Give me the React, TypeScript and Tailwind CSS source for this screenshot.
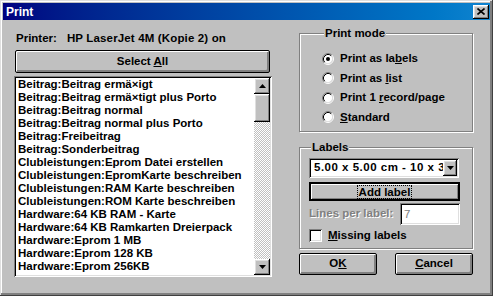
import React from 'react';

const items = [
  'Beitrag:Beitrag ermä×igt',
  'Beitrag:Beitrag ermä×tigt plus Porto',
  'Beitrag:Beitrag normal',
  'Beitrag:Beitrag normal plus Porto',
  'Beitrag:Freibeitrag',
  'Beitrag:Sonderbeitrag',
  'Clubleistungen:Eprom Datei erstellen',
  'Clubleistungen:EpromKarte beschreiben',
  'Clubleistungen:RAM Karte beschreiben',
  'Clubleistungen:ROM Karte beschreiben',
  'Hardware:64 KB RAM - Karte',
  'Hardware:64 KB Ramkarten Dreierpack',
  'Hardware:Eprom 1 MB',
  'Hardware:Eprom 128 KB',
  'Hardware:Eprom 256KB',
];

const raised =
  'shadow-[inset_-1px_-1px_#000,inset_1px_1px_#fff,inset_-2px_-2px_#808080,inset_2px_2px_#dfdfdf]';
const sunken =
  'shadow-[inset_1px_1px_#808080,inset_-1px_-1px_#fff,inset_2px_2px_#000,inset_-2px_-2px_#dfdfdf]';
const oldButton =
  'border border-black rounded-[2px] shadow-[inset_1px_1px_#fff,inset_-1px_-1px_#808080,inset_-2px_-2px_#808080]';

const Arrow = ({ down }: { down?: boolean }) => (
  <svg width="7" height="4" viewBox="0 0 7 4">
    {down ? <path d="M0 0h7L3.5 4z" fill="#000" /> : <path d="M0 4h7L3.5 0z" fill="#000" />}
  </svg>
);

const Radio = ({ checked }: { checked?: boolean }) => (
  <svg width="12" height="12" viewBox="0 0 12 12" className="shrink-0">
    <circle cx="6" cy="6" r="4.5" fill="#fff" />
    <path d="M2.11 9.89A5.5 5.5 0 0 1 9.89 2.11" stroke="#808080" fill="none" />
    <path d="M9.89 2.11A5.5 5.5 0 0 1 2.11 9.89" stroke="#fff" fill="none" />
    <path d="M2.82 9.18A4.5 4.5 0 0 1 9.18 2.82" stroke="#000" fill="none" />
    <path d="M9.18 2.82A4.5 4.5 0 0 1 2.82 9.18" stroke="#dfdfdf" fill="none" />
    {checked && <circle cx="6" cy="6" r="2" fill="#000" />}
  </svg>
);

const Group = ({ title, className, children }: { title: string; className?: string; children: React.ReactNode }) => (
  <fieldset
    className={`border border-[#808080] shadow-[1px_1px_0_#fff,inset_1px_1px_0_#fff] ${className ?? ''}`}
  >
    <legend className="ml-[2px] px-[1px] bg-[#c0c0c0] leading-[13px]">{title}</legend>
    {children}
  </fieldset>
);

export default function App() {
  return (
    <div className="w-[493px] h-[296px] bg-[#c0c0c0] p-[3px] flex flex-col text-[11.5px] font-bold text-black font-['Liberation_Sans',Arial,sans-serif] shadow-[inset_-1px_-1px_#404040,inset_1px_1px_#dfdfdf,inset_-3px_-3px_#808080,inset_2px_2px_#fff]">
      {/* title bar */}
      <div className="h-[17px] flex items-center justify-between pl-[3px] bg-linear-to-r from-[#000080] to-[#1084d0]">
        <span className="text-white text-[12px]">Print</span>
        <div className={`w-[16px] h-[14px] mr-[1px] bg-[#c0c0c0] flex items-center justify-center ${raised}`}>
          <svg width="8" height="7" viewBox="0 0 8 7">
            <path d="M0.5 0.5l7 6M7.5 0.5l-7 6" stroke="#000" strokeWidth="1.6" />
          </svg>
        </div>
      </div>

      <div className="flex flex-1 pl-[11px]">
        {/* left column */}
        <div className="w-[258px] pt-[12px] flex flex-col">
          <div className="flex leading-[13px] pl-[2px]">
            <span>Printer:</span>
            <span className="ml-[10px] tracking-[0.15px]">HP LaserJet 4M (Kopie 2) on</span>
          </div>
          <button className={`mt-[5px] ml-[1px] w-[255px] h-[23px] bg-[#c0c0c0] ${oldButton}`}>
            Select <span className="underline">A</span>ll
          </button>
          <div className={`mt-[3px] h-[201px] flex p-[2px] bg-white ${sunken}`}>
            <div className="flex-1 pl-[2px] overflow-hidden leading-[13px] whitespace-nowrap">
              {items.map((t) => (
                <div key={t}>{t}</div>
              ))}
            </div>
            <div className="w-[16px] flex flex-col">
              <div className={`h-[16px] bg-[#c0c0c0] flex items-center justify-center ${raised}`}>
                <Arrow />
              </div>
              <div className="flex-1 bg-[image:repeating-conic-gradient(#c0c0c0_0%_25%,#ffffff_0%_50%)] bg-[length:2px_2px]">
                <div className={`h-[28px] bg-[#c0c0c0] ${raised}`} />
              </div>
              <div className={`h-[16px] bg-[#c0c0c0] flex items-center justify-center ${raised}`}>
                <Arrow down />
              </div>
            </div>
          </div>
        </div>

        {/* right column */}
        <div className="ml-[27px] w-[174px] pt-[7px] flex flex-col">
          <Group title="Print mode" className="pt-[9px] pb-[4px] pl-[22px]">
            {[
              ['Print as la', 'b', 'els', true],
              ['Print as ', 'l', 'ist', false],
              ['Print 1 ', 'r', 'ecord/page', false],
              ['', 'S', 'tandard', false],
            ].map(([a, u, b, c]) => (
              <div key={`${a}${u}${b}`} className="h-[19.5px] flex items-center gap-[6px]">
                <Radio checked={c as boolean} />
                <span>
                  {a as string}
                  <span className="underline">{u as string}</span>
                  {b as string}
                </span>
              </div>
            ))}
          </Group>

          <Group title="Labels" className="mt-[9px] pt-[4px] pb-[6px] pl-[9px]">
            <div className={`w-[150px] h-[20px] flex items-center p-[2px] bg-white ${sunken}`}>
              <span className="flex-1 pl-[3px] overflow-hidden whitespace-nowrap tracking-[0.5px]">5.00 x 5.00 cm - 10 x 3</span>
              <div className={`w-[14px] h-[16px] bg-[#c0c0c0] flex items-center justify-center ${raised}`}>
                <Arrow down />
              </div>
            </div>
            <button className="mt-[4px] w-[151px] h-[19px] bg-[#c0c0c0] border-2 border-black shadow-[inset_1px_1px_#fff,inset_-1px_-1px_#808080] flex items-center justify-center">
              <span className="outline-1 outline-dotted outline-black px-[1px] leading-[12px]">Add label</span>
            </button>
            <div className="mt-[2px] w-[151px] h-[22px] flex items-center">
              <span className="text-[#808080] [text-shadow:1px_1px_0_#fff]">Lines per label:</span>
              <div className={`ml-auto w-[60px] h-[22px] bg-white pl-[4px] pt-[3px] text-[#808080] font-normal ${sunken}`}>
                7
              </div>
            </div>
            <div className="mt-[4px] flex items-center gap-[6px] h-[13px]">
              <div className={`w-[13px] h-[13px] bg-white ${sunken}`} />
              <span>
                <span className="underline">M</span>issing labels
              </span>
            </div>
          </Group>

          <div className="mt-[4px] flex justify-between">
            <button className={`w-[78px] h-[22px] bg-[#c0c0c0] ${oldButton}`}>
              O<span className="underline">K</span>
            </button>
            <button className={`w-[78px] h-[22px] bg-[#c0c0c0] ${oldButton}`}>
              <span className="underline">C</span>ancel
            </button>
          </div>
        </div>
      </div>
    </div>
  );
}
